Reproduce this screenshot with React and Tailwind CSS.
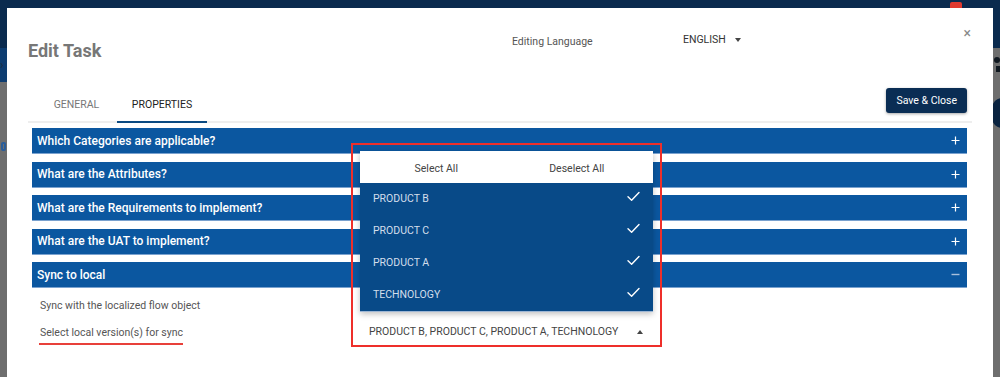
import React from "react";

const font = { fontFamily: "Roboto, 'Noto Sans', Arial, sans-serif" };

function Check() {
  return (
    <svg width="13" height="11" viewBox="0 0 13 11" fill="none">
      <path d="M1 5.8 L4.6 9.2 L12 1.4" stroke="white" strokeWidth="1.4" strokeLinecap="round" strokeLinejoin="round" />
    </svg>
  );
}

function Plus() {
  return (
    <svg width="9" height="9" viewBox="0 0 9 9">
      <path d="M4.5 0.5 V8.5 M0.5 4.5 H8.5" stroke="white" strokeWidth="1.2" />
    </svg>
  );
}

function Minus() {
  return (
    <svg width="9" height="9" viewBox="0 0 9 9">
      <path d="M0.5 4.5 H8.5" stroke="#a9c0dc" strokeWidth="1.4" />
    </svg>
  );
}

function Header({ title, open }) {
  return (
    <div className="h-[26px] flex items-center justify-between pl-[5px] pr-[7px] bg-[#0b57a0] border-b border-[#7aa2cf] text-white text-[12px] font-medium">
      <span>{title}</span>
      {open ? <Minus /> : <Plus />}
    </div>
  );
}

export default function App() {
  const items = ["PRODUCT B", "PRODUCT C", "PRODUCT A", "TECHNOLOGY"];
  return (
    <div className="relative w-[1000px] h-[377px] overflow-hidden bg-[#6e6e6e] pt-[8px] pl-[7px]" style={font}>
      {/* obscured page behind the modal */}
      <div className="absolute top-0 left-0 right-0 h-[48px] bg-[#0a2a4e]" />
      <div className="absolute top-[48px] left-0 w-[8px] h-[34px] bg-[#0d3c70] text-[#1d2b3d] text-[12px] leading-[34px]">›</div>
      <div className="absolute top-[142px] left-[1px] w-[5px] h-[9px] border-2 border-[#2a5d9a] rounded-[2px]" />
      <div className="absolute top-[2px] left-[950px] w-[12px] h-[8px] rounded-[2px] bg-[#e0392f]" />
      <div className="absolute top-[57px] left-[994px] w-[6px] h-[6px] rounded-full bg-[#101820]" />
      <div className="absolute top-[66px] left-[996px] w-[4px] h-[6px] bg-[#101820]" />
      <div className="absolute top-[98px] left-[992px] w-[20px] h-[30px] rounded-full bg-[#0a2340]" />

      {/* modal */}
      <div className="relative w-[986px] h-[369px] bg-white px-[21px]">
        <div className="h-[80px] flex items-start">
          <div className="w-[484px] pt-[33px] text-[18px] leading-[20px] font-bold text-[#777777]">Edit Task</div>
          <div className="w-[171px] pt-[27px] text-[10.5px] leading-[14px] text-[#555555]">Editing Language</div>
          <div className="pt-[25px] flex items-center text-[10.5px] leading-[14px] text-[#333333]">
            <span>ENGLISH</span>
            <span className="ml-[9px] w-0 h-0 border-l-[3.5px] border-r-[3.5px] border-t-[4px] border-l-transparent border-r-transparent border-t-[#444444]" />
          </div>
          <div className="flex-1" />
          <div className="pt-[18px] pr-[1px] text-[#888888] text-[14px] leading-[14px]">×</div>
        </div>

        <div className="h-[35px] flex border-b-2 border-[#eeeeee]">
          <div className="w-[89px] flex items-center justify-center pl-[8px] pt-[1px] text-[10.5px] text-[#777777]">GENERAL</div>
          <div className="w-[90px] flex items-center justify-center pt-[1px] text-[10.5px] text-[#222222] border-b-2 border-[#0b4a82] -mb-[2px]">PROPERTIES</div>
          <div className="flex-1" />
          <div className="self-start mr-[5px] h-[25px] px-[10px] flex items-center rounded-[3px] bg-[#0a2d54] text-white text-[10.5px] shadow-[0_1px_3px_rgba(0,0,0,0.35)]">Save &amp; Close</div>
        </div>

        <div className="mt-[5px] ml-[4px] mr-[5px] flex flex-col gap-[7.5px]">
          <Header title="Which Categories are applicable?" />
          <Header title="What are the Attributes?" />
          <Header title="What are the Requirements to implement?" />
          <Header title="What are the UAT to implement?" />
          <div>
            <Header title="Sync to local" open />
            <div className="pl-[8px] pt-[11px] text-[10.5px] text-[#555555]">
              <div className="leading-[14px]">Sync with the localized flow object</div>
              <div className="mt-[12px] flex items-start">
                <div className="w-[320px]">
                  <span className="inline-block leading-[14px] pb-[3px] border-b-2 border-[#e8403a] -ml-[1px] pl-[1px]">Select local version(s) for sync</span>
                </div>
                <div className="relative -mt-[5px] w-[293px] h-[24px] flex items-center justify-between pl-[9px] pr-[10px] text-[#444444]">
                  <span>PRODUCT B, PRODUCT C, PRODUCT A, TECHNOLOGY</span>
                  <span className="w-0 h-0 border-l-[3.5px] border-r-[3.5px] border-b-[4px] border-l-transparent border-r-transparent border-b-[#444444]" />

                  {/* open dropdown menu */}
                  <div className="absolute left-0 right-0 bottom-[32px] bg-white shadow-[0_2px_6px_rgba(0,0,0,0.25)] z-10">
                    <div className="h-[32px] grid grid-cols-2 px-[6px] pt-[3px] items-center text-[10.5px] text-[#444444]">
                      <div className="text-center">Select All</div>
                      <div className="text-center">Deselect All</div>
                    </div>
                    <div className="bg-[#084a88] border-b border-[#9db6d4]">
                      {items.map((it) => (
                        <div key={it} className="h-[32px] flex items-center justify-between pl-[13px] pr-[13px] pb-[1px] text-[10.5px] text-[#d3deeb]">
                          <span>{it}</span>
                          <span className="-mt-[4px]"><Check /></span>
                        </div>
                      ))}
                    </div>
                  </div>

                  {/* red annotation box */}
                  <div className="absolute -left-[9px] -right-[9px] -top-[177px] -bottom-[3px] border-2 border-[#ee2f2a] pointer-events-none z-20" />
                </div>
              </div>
            </div>
          </div>
        </div>
      </div>
    </div>
  );
}
